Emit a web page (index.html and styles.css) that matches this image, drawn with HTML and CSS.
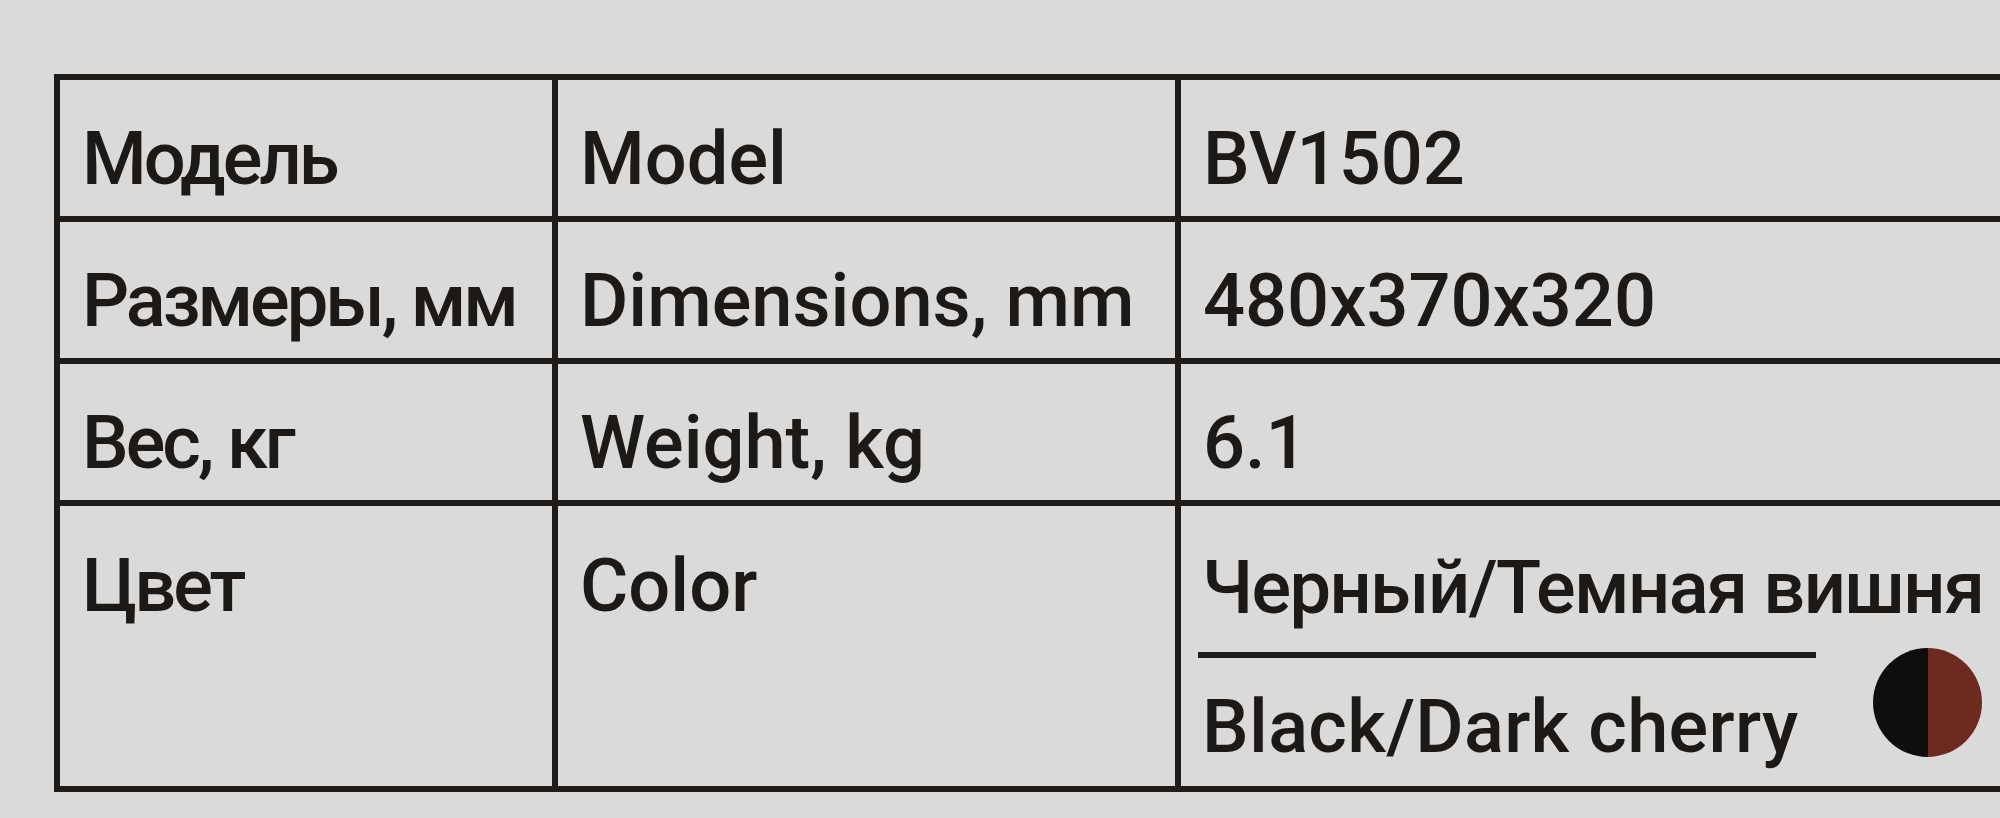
FILE: index.html
```html
<!DOCTYPE html>
<html lang="ru">
<head>
<meta charset="utf-8">
<title>BV1502</title>
<link rel="stylesheet" href="styles.css">
</head>
<body>
<div class="sheet">
  <div class="spec">
    <div class="cell c1 r">Модель</div>
    <div class="cell c2 r">Model</div>
    <div class="cell c3 r">BV1502</div>

    <div class="cell c1 r">Размеры, мм</div>
    <div class="cell c2 r">Dimensions, mm</div>
    <div class="cell c3 r">480x370x320</div>

    <div class="cell c1 r">Вес, кг</div>
    <div class="cell c2 r">Weight, kg</div>
    <div class="cell c3 r">6.1</div>

    <div class="cell c1 tall">Цвет</div>
    <div class="cell c2 tall">Color</div>
    <div class="cell c3 tall color-cell">
      <div class="ru">Черный/Темная вишня</div>
      <div class="color-row">
        <div class="color-text">
          <div class="rule"></div>
          <div class="en">Black/Dark cherry</div>
        </div>
        <div class="swatch"></div>
      </div>
    </div>
  </div>
</div>
</body>
</html>
```

FILE: styles.css
```css
html, body {
  margin: 0;
  padding: 0;
}

body {
  background: #d9dad9;
  width: 2000px;
  height: 818px;
  overflow: hidden;
  font-family: Roboto, "Noto Sans", sans-serif;
  font-weight: 500;
  color: #1c1917;
}

.sheet {
  padding: 74px 0 0 54px;
}

.spec {
  display: grid;
  grid-template-columns: 498px 623px 1000px;
  grid-template-rows: 142px 142px 142px 286px;
  border-top: 6px solid #1f1b18;
  border-left: 6px solid #1f1b18;
  width: 2121px;
}

.cell {
  box-sizing: border-box;
  border-bottom: 6px solid #1f1b18;
  border-right: 6px solid #1f1b18;
  font-size: 74px;
  line-height: 74px;
  padding: 42px 0 0 22px;
  white-space: nowrap;
}

.c1 {
  letter-spacing: -3px;
}

.c3 {
  border-right: none;
}

.tall {
  padding-top: 43px;
}

.color-cell {
  padding: 45px 0 0 17px;
  display: flex;
  flex-direction: column;
}

.ru {
  padding-left: 4px;
  letter-spacing: -1.6px;
}

.color-row {
  display: flex;
  align-items: flex-start;
  margin-top: 27px;
}

.color-text {
  display: flex;
  flex-direction: column;
  width: 618px;
}

.rule {
  height: 6px;
  background: #1f1b18;
}

.en {
  margin-top: 32px;
  padding-left: 4px;
  letter-spacing: 0.3px;
}

.swatch {
  width: 109px;
  height: 109px;
  border-radius: 50%;
  margin: -4px 0 0 57px;
  background: linear-gradient(to right, #100e0d 50%, #6c2a21 50%);
}
```
